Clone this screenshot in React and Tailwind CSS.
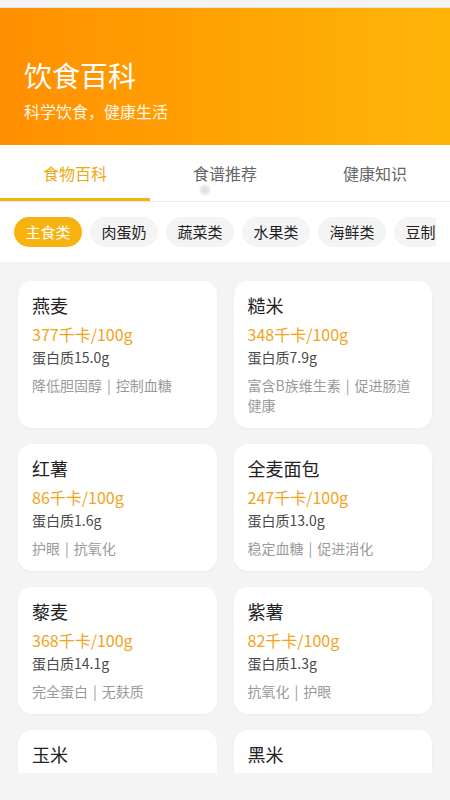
import React from "react";

const FONT = { fontFamily: '"Noto Sans CJK SC", "Noto Sans", sans-serif' };

const chips = ["主食类", "肉蛋奶", "蔬菜类", "水果类", "海鲜类", "豆制品", "坚果类"];

const foods = [
  { name: "燕麦", cal: "377千卡/100g", protein: "蛋白质15.0g", tags: ["降低胆固醇", "控制血糖"] },
  { name: "糙米", cal: "348千卡/100g", protein: "蛋白质7.9g", tags: ["富含B族维生素", "促进肠道健康"] },
  { name: "红薯", cal: "86千卡/100g", protein: "蛋白质1.6g", tags: ["护眼", "抗氧化"] },
  { name: "全麦面包", cal: "247千卡/100g", protein: "蛋白质13.0g", tags: ["稳定血糖", "促进消化"] },
  { name: "藜麦", cal: "368千卡/100g", protein: "蛋白质14.1g", tags: ["完全蛋白", "无麸质"] },
  { name: "紫薯", cal: "82千卡/100g", protein: "蛋白质1.3g", tags: ["抗氧化", "护眼"] },
  { name: "玉米", cal: "112千卡/100g", protein: "蛋白质4.0g", tags: ["膳食纤维", "护眼"] },
  { name: "黑米", cal: "341千卡/100g", protein: "蛋白质9.4g", tags: ["补血", "抗氧化"] },
];

function Card({ f }) {
  return (
    <div className="rounded-[14px] bg-white px-[14px] pt-3 pb-[13px] shadow-[0_1px_3px_rgba(0,0,0,0.04)]">
      <div className="text-[18px] leading-[24px] text-[#222]">{f.name}</div>
      <div className="mt-[6px] text-[16px] leading-[22px] text-[#f2a31b]">{f.cal}</div>
      <div className="mt-[2px] text-[14px] leading-[20px] text-[#4a4a4a]">{f.protein}</div>
      <div className="mt-2 text-[14px] leading-[20px] text-[#9a9a9a]">
        {f.tags[0]}
        <span className="mx-[5px]">|</span>
        {f.tags[1]}
      </div>
    </div>
  );
}

export default function App() {
  return (
    <div className="flex h-[800px] w-[450px] flex-col overflow-hidden bg-[#f4f4f4]" style={FONT}>
      <div className="h-[8px] shrink-0 border-b border-[#e6e8e0] bg-[#f4f4f4]" />
      <div className="h-[137px] shrink-0 bg-gradient-to-r from-[#ff8f00] to-[#ffb508] px-6 pt-[49px]">
        <div className="text-[28px] leading-[36px] text-white">饮食百科</div>
        <div className="mt-[6px] text-[16px] leading-[24px] text-white/90">科学饮食，健康生活</div>
      </div>
      <div className="relative flex h-[57px] shrink-0 border-b border-[#ececec] bg-white">
        <div className="relative flex flex-1 items-center justify-center text-[16px] text-[#eeaa10]">
          食物百科
          <div className="absolute bottom-0 left-0 h-[3px] w-full bg-[#f7b20f]" />
        </div>
        <div className="flex flex-1 items-center justify-center text-[16px] text-[#666]">食谱推荐</div>
        <div className="flex flex-1 items-center justify-center text-[16px] text-[#666]">健康知识</div>
        <div className="absolute left-[200px] top-[40px] h-[10px] w-[10px] rounded-full bg-[#d8d8d8] opacity-70 blur-[1px]" />
      </div>
      <div className="flex h-[60px] shrink-0 items-center bg-white px-[14px]">
        <div className="flex gap-2 overflow-hidden">
          {chips.map((c, i) => (
            <div
              key={c}
              className={
                i === 0
                  ? "flex h-[30px] w-[68px] shrink-0 items-center justify-center rounded-full bg-[#f7b20f] text-[15px] text-white"
                  : "flex h-[30px] w-[68px] shrink-0 items-center justify-center rounded-full bg-[#f4f4f4] text-[15px] text-[#222]"
              }
            >
              {c}
            </div>
          ))}
        </div>
      </div>
      <div className="h-[511px] shrink-0 overflow-hidden px-[18px] pt-[19px]">
        <div className="grid grid-cols-2 gap-x-[17px] gap-y-[16px]">
          {foods.map((f) => (
            <Card key={f.name} f={f} />
          ))}
        </div>
      </div>
      <div className="flex-1 bg-[#f4f4f4]" />
    </div>
  );
}
